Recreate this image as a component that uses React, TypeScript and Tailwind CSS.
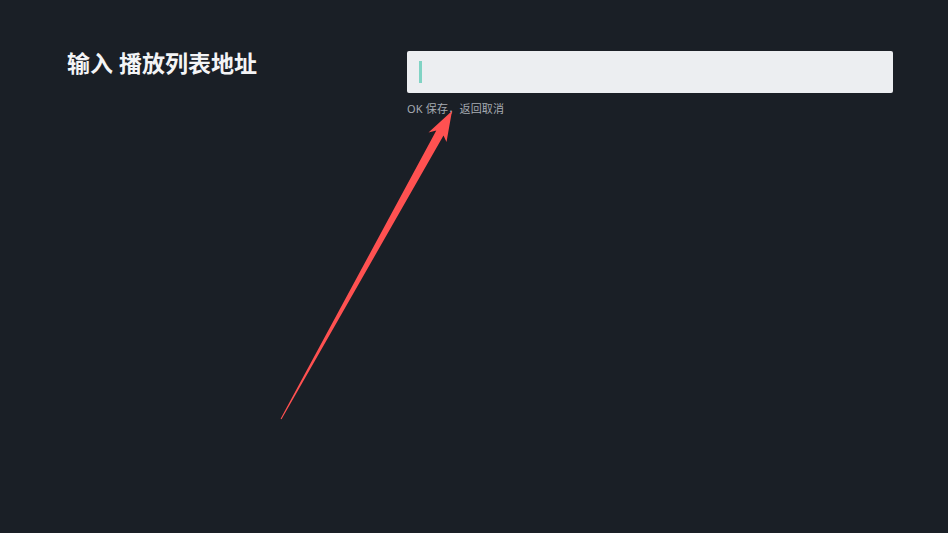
export default function App() {
  return (
    <div
      className="relative min-h-[533px] w-full overflow-hidden bg-[#1a1f26]"
      style={{ fontFamily: '"Noto Sans", "Noto Sans CJK SC", sans-serif' }}
    >
      <div className="flex pt-[51px]">
        <div className="w-[407px] shrink-0 pl-[67px]">
          <h1 className="mt-[1px] text-[23px] font-bold leading-[23px] text-[#f3f4f6]">
            输入 播放列表地址
          </h1>
        </div>
        <div className="w-[486px] shrink-0">
          <div className="flex h-[42px] items-center rounded-[2px] bg-[#eceef1] pl-[12px]">
            <span className="h-[22px] w-[3px] bg-[#80d3c4]" />
          </div>
          <p className="mt-[10px] text-[11px] leading-[12px] tracking-[0.2px] text-[#a6abb2]">
            OK 保存，返回取消
          </p>
        </div>
      </div>

      {/* annotation arrow */}
      <svg
        className="pointer-events-none absolute inset-0"
        width="948"
        height="533"
        viewBox="0 0 948 533"
      >
        <polygon
          points="452,111 446.5,142 443.5,135.5 281.5,419.3 280.6,418.8 436.3,130.5 428.5,132.5"
          fill="#ff5151"
        />
      </svg>
    </div>
  );
}
